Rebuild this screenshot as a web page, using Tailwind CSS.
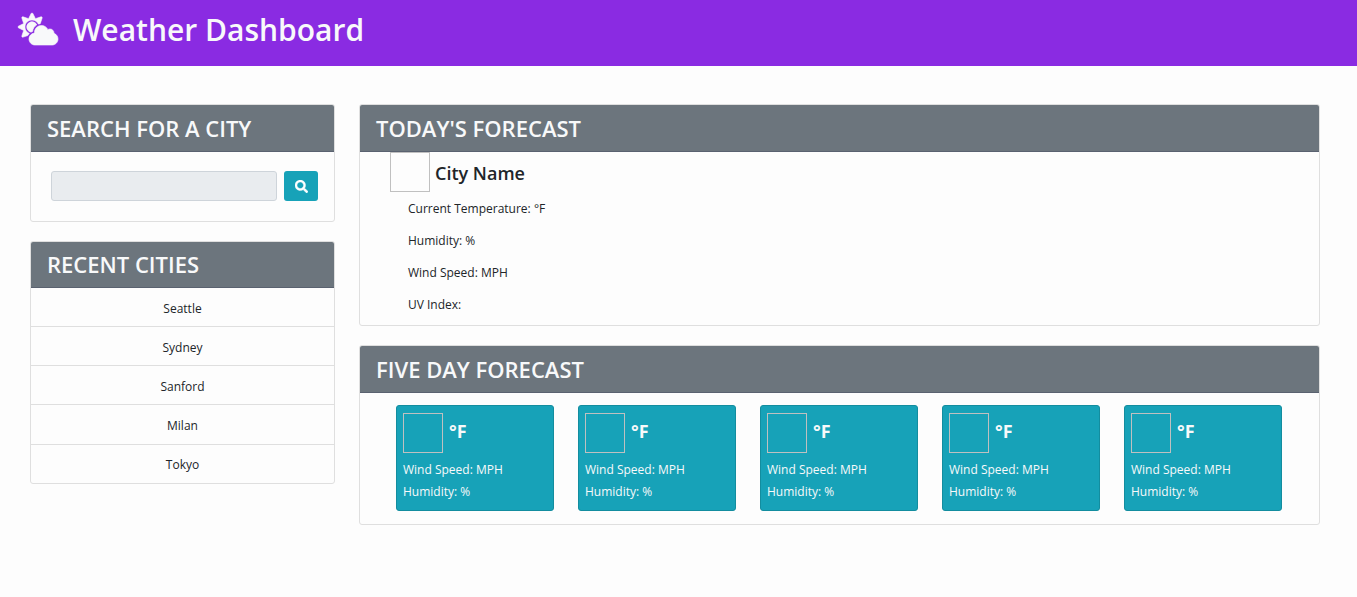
<!DOCTYPE html>
<html lang="en">
<head>
<meta charset="utf-8">
<meta name="viewport" content="width=device-width, initial-scale=1">
<title>Weather Dashboard</title>
<script src="https://cdn.jsdelivr.net/npm/@tailwindcss/browser@4"></script>
</head>
<body class="min-h-screen bg-[#fdfdfd] font-['Segoe_UI','Open_Sans',sans-serif] text-xs leading-5 text-[#212529]">
<header class="flex h-[66px] items-start gap-[15px] bg-[#8a2be2] px-[18px] pt-[6px] text-[#f8f9fa]">
  <svg class="mt-[7px] h-8 w-10 shrink-0 overflow-visible" viewBox="0 0 640 512" fill="currentColor" stroke="currentColor" stroke-width="10" aria-hidden="true"><path d="M575.2 325.7c.2-1.9.8-3.7.8-5.6 0-35.3-28.7-64-64-64-12.6 0-24.2 3.8-34.1 10-17.6-38.8-56.5-66-101.9-66-61.8 0-112 50.1-112 112 0 3 .7 5.8.9 8.7-49.6 3.7-88.9 44.7-88.9 95.3 0 53 43 96 96 96h272c53 0 96-43 96-96 0-42.1-27.2-77.4-64.8-90.4zm-430.4-22.6c-43.7-43.7-43.7-114.7 0-158.3 43.7-43.7 114.7-43.7 158.4 0 9.7 9.7 16.9 20.9 22.3 32.7 9.8-3.7 20.1-6 30.7-7.5L386 81.1c4-11.9-7.3-23.1-19.2-19.2L279 91.2 237.5 8.4C232-2.8 216-2.8 210.4 8.4L169 91.2 81.1 61.9C69.3 58 58 69.3 61.9 81.1l29.3 87.8-82.8 41.5c-11.2 5.6-11.2 21.5 0 27.1l82.8 41.4-29.3 87.8c-4 11.9 7.3 23.1 19.1 19.2l76.1-25.3c6.1-12.4 14-23.7 23.6-33.5-13.1-5.4-25.4-13.4-36-24zm-4.8-79.2c0 40.8 29.3 74.8 67.9 82.3 8-4.7 16.3-8.8 25.2-11.7 5.4-44.3 31-82.5 67.4-105C287.3 160.4 258 140 224 140c-46.3 0-84 37.6-84 83.9z"/></svg>
  <h1 class="text-3xl leading-12 font-semibold">Weather Dashboard</h1>
</header>
<main class="flex items-start gap-6 pt-[38px] pr-[37px] pb-6 pl-[30px]">
  <aside class="flex w-[305px] shrink-0 flex-col gap-[19px]">
    <section class="overflow-hidden rounded-[3px] border border-[#dfdfdf]">
      <h2 class="border-b border-[#5a6270] bg-[#6c757d] px-4 py-2 text-[22px] leading-[30px] font-semibold text-[#f8f9fa]"><label for="city">SEARCH FOR A CITY</label></h2>
      <form class="flex gap-[7px] pt-[19px] pr-4 pb-5 pl-5">
        <input id="city" type="text" class="h-[30px] min-w-0 flex-1 rounded-[3px] border border-[#ced4da] bg-[#e9ecef] px-2">
        <button type="button" aria-label="Search" class="flex h-[30px] w-[34px] items-center justify-center rounded-[3px] bg-[#17a2b8] text-white"><svg class="mt-px h-[13px] w-[13px]" viewBox="0 0 512 512" fill="currentColor" stroke="currentColor" stroke-width="16" aria-hidden="true"><path d="M505 442.7L405.3 343c-4.5-4.5-10.6-7-17-7H372c27.6-35.3 44-79.7 44-128C416 93.1 322.9 0 208 0S0 93.1 0 208s93.1 208 208 208c48.3 0 92.7-16.4 128-44v16.3c0 6.4 2.5 12.5 7 17l99.7 99.7c9.4 9.4 24.6 9.4 33.9 0l28.3-28.3c9.4-9.4 9.4-24.6.1-34zM208 336c-70.7 0-128-57.2-128-128 0-70.7 57.2-128 128-128 70.7 0 128 57.2 128 128 0 70.7-57.2 128-128 128z"/></svg></button>
      </form>
    </section>
    <section class="overflow-hidden rounded-[3px] border border-[#dfdfdf]">
      <h2 class="border-b border-[#5a6270] bg-[#6c757d] px-4 pt-[7px] pb-2 text-[22px] leading-[30px] font-semibold text-[#f8f9fa]">RECENT CITIES</h2>
      <ul class="divide-y divide-[#dfdfdf] text-center">
        <li class="pt-[11px] pb-[7px]">Seattle</li>
        <li class="pt-[11px] pb-[7px]">Sydney</li>
        <li class="pt-[11px] pb-[7px]">Sanford</li>
        <li class="pt-[11px] pb-2">Milan</li>
        <li class="pt-[10px] pb-2">Tokyo</li>
      </ul>
    </section>
  </aside>
  <div class="flex min-w-0 flex-1 flex-col gap-[19px]">
    <section class="overflow-hidden rounded-[3px] border border-[#dfdfdf]">
      <h2 class="border-b border-[#5a6270] bg-[#6c757d] px-4 py-2 text-[22px] leading-[30px] font-semibold text-[#f8f9fa]">TODAY'S FORECAST</h2>
      <div class="pb-[10px] pl-[30px]">
        <div class="flex items-center gap-[5px]">
          <div class="size-10 border border-[#c0c0c0]"></div>
          <h3 class="pt-[2px] text-lg leading-5 font-semibold">City Name</h3>
        </div>
        <div class="flex flex-col gap-3 pt-[7px] pl-[18px]">
          <p>Current Temperature: °F</p>
          <p>Humidity: %</p>
          <p>Wind Speed: MPH</p>
          <p>UV Index:</p>
        </div>
      </div>
    </section>
    <section class="overflow-hidden rounded-[3px] border border-[#dfdfdf]">
      <h2 class="border-b border-[#5a6270] bg-[#6c757d] px-4 py-2 text-[22px] leading-[30px] font-semibold text-[#f8f9fa]">FIVE DAY FORECAST</h2>
      <div class="grid grid-cols-5 gap-6 pt-3 pr-[37px] pb-[13px] pl-9 text-[#f8f9fa]">
        <article class="rounded-[3px] border border-[#138d9f] bg-[#17a2b8] px-[6px] py-[7px]">
          <div class="flex items-center gap-[6px] pb-[6px]"><div class="size-10 border border-[#c0c0c0]"></div><h3 class="pb-1 text-lg leading-5 font-bold">°F</h3></div>
          <p class="leading-[22px]">Wind Speed: MPH</p><p class="leading-[22px]">Humidity: %</p>
        </article>
        <article class="rounded-[3px] border border-[#138d9f] bg-[#17a2b8] px-[6px] py-[7px]">
          <div class="flex items-center gap-[6px] pb-[6px]"><div class="size-10 border border-[#c0c0c0]"></div><h3 class="pb-1 text-lg leading-5 font-bold">°F</h3></div>
          <p class="leading-[22px]">Wind Speed: MPH</p><p class="leading-[22px]">Humidity: %</p>
        </article>
        <article class="rounded-[3px] border border-[#138d9f] bg-[#17a2b8] px-[6px] py-[7px]">
          <div class="flex items-center gap-[6px] pb-[6px]"><div class="size-10 border border-[#c0c0c0]"></div><h3 class="pb-1 text-lg leading-5 font-bold">°F</h3></div>
          <p class="leading-[22px]">Wind Speed: MPH</p><p class="leading-[22px]">Humidity: %</p>
        </article>
        <article class="rounded-[3px] border border-[#138d9f] bg-[#17a2b8] px-[6px] py-[7px]">
          <div class="flex items-center gap-[6px] pb-[6px]"><div class="size-10 border border-[#c0c0c0]"></div><h3 class="pb-1 text-lg leading-5 font-bold">°F</h3></div>
          <p class="leading-[22px]">Wind Speed: MPH</p><p class="leading-[22px]">Humidity: %</p>
        </article>
        <article class="rounded-[3px] border border-[#138d9f] bg-[#17a2b8] px-[6px] py-[7px]">
          <div class="flex items-center gap-[6px] pb-[6px]"><div class="size-10 border border-[#c0c0c0]"></div><h3 class="pb-1 text-lg leading-5 font-bold">°F</h3></div>
          <p class="leading-[22px]">Wind Speed: MPH</p><p class="leading-[22px]">Humidity: %</p>
        </article>
      </div>
    </section>
  </div>
</main>
</body>
</html>
